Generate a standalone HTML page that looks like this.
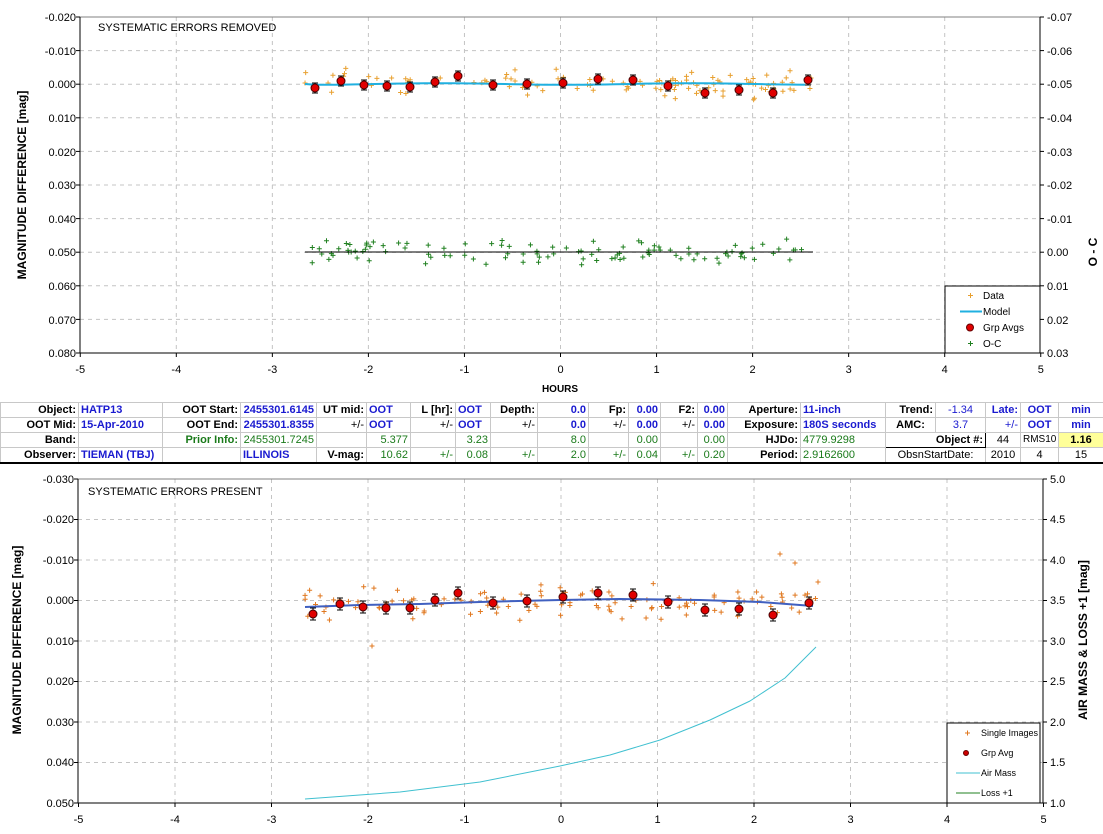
<!DOCTYPE html>
<html><head><meta charset="utf-8"><style>
html,body{margin:0;padding:0;background:#fff;width:1103px;height:834px;overflow:hidden;font-family:"Liberation Sans",Arial,sans-serif}
#tbl{position:absolute;left:0;top:402px;border-collapse:collapse;table-layout:fixed;width:1103px;font-size:11px;border-top:1px solid #000;border-bottom:2px solid #000}
#tbl td{height:14px;padding:0 2px;border:1px solid #c8c8c8;white-space:nowrap;overflow:hidden;line-height:14px;text-align:right}
.b{font-weight:bold}.bl{color:#1a1ad0}.g{color:#1a7a1a}.l{text-align:left!important}.c{text-align:center!important}
</style></head><body>
<svg id="s" width="1103" height="834" style="position:absolute;left:0;top:0" font-family="Liberation Sans, Arial, sans-serif">
<g id="top"></g><g id="bot"></g>
<text x="98" y="31" font-size="11">SYSTEMATIC ERRORS REMOVED</text>
<text x="88" y="495" font-size="11">SYSTEMATIC ERRORS PRESENT</text>
<text transform="translate(26,185) rotate(-90)" font-size="12" font-weight="bold" text-anchor="middle">MAGNITUDE DIFFERENCE [mag]</text>
<text transform="translate(21,640) rotate(-90)" font-size="12" font-weight="bold" text-anchor="middle">MAGNITUDE DIFFERENCE [mag]</text>
<text transform="translate(1097,252) rotate(-90)" font-size="12" font-weight="bold" text-anchor="middle">O - C</text>
<text transform="translate(1087,640) rotate(-90)" font-size="12" font-weight="bold" text-anchor="middle">AIR MASS &amp; LOSS +1 [mag]</text>
<text x="560" y="392" font-size="10" font-weight="bold" text-anchor="middle">HOURS</text>
<g font-size="11" fill="#000">
<text x="76" y="21" text-anchor="end">-0.020</text><text x="76" y="55" text-anchor="end">-0.010</text><text x="76" y="88" text-anchor="end">0.000</text><text x="76" y="122" text-anchor="end">0.010</text><text x="76" y="156" text-anchor="end">0.020</text><text x="76" y="189" text-anchor="end">0.030</text><text x="76" y="223" text-anchor="end">0.040</text><text x="76" y="256" text-anchor="end">0.050</text><text x="76" y="290" text-anchor="end">0.060</text><text x="76" y="324" text-anchor="end">0.070</text><text x="76" y="357" text-anchor="end">0.080</text>
<text x="1047" y="21">-0.07</text><text x="1047" y="55">-0.06</text><text x="1047" y="88">-0.05</text><text x="1047" y="122">-0.04</text><text x="1047" y="156">-0.03</text><text x="1047" y="189">-0.02</text><text x="1047" y="223">-0.01</text><text x="1047" y="256">0.00</text><text x="1047" y="290">0.01</text><text x="1047" y="324">0.02</text><text x="1047" y="357">0.03</text>
<text x="74" y="483" text-anchor="end">-0.030</text><text x="74" y="523" text-anchor="end">-0.020</text><text x="74" y="564" text-anchor="end">-0.010</text><text x="74" y="604" text-anchor="end">0.000</text><text x="74" y="645" text-anchor="end">0.010</text><text x="74" y="685" text-anchor="end">0.020</text><text x="74" y="726" text-anchor="end">0.030</text><text x="74" y="766" text-anchor="end">0.040</text><text x="74" y="807" text-anchor="end">0.050</text>
<text x="1050" y="483">5.0</text><text x="1050" y="523">4.5</text><text x="1050" y="564">4.0</text><text x="1050" y="604">3.5</text><text x="1050" y="645">3.0</text><text x="1050" y="685">2.5</text><text x="1050" y="726">2.0</text><text x="1050" y="766">1.5</text><text x="1050" y="807">1.0</text>
</g>
<g id="xl" font-size="11" text-anchor="middle"></g>
<rect x="945" y="286" width="95" height="67" fill="#fff" stroke="#000"/>
<g font-size="10"><text x="983" y="299">Data</text><text x="983" y="315">Model</text><text x="983" y="331">Grp Avgs</text><text x="983" y="347">O-C</text></g>
<path d="M968 295.5h5M970.5 293v5" stroke="#e8a030"/><path d="M960 311.5h22" stroke="#20b0e0" stroke-width="2"/><circle cx="970" cy="327.5" r="3.5" fill="#e00000" stroke="#600"/><path d="M968 343.5h5M970.5 341v5" stroke="#208020"/>
<rect x="947" y="723" width="93" height="80" fill="#fff" stroke="#000"/>
<g font-size="9"><text x="981" y="736">Single Images</text><text x="981" y="756">Grp Avg</text><text x="981" y="776">Air Mass</text><text x="981" y="796">Loss +1</text></g>
<path d="M965 733h5M967.5 730.5v5" stroke="#e07820"/><circle cx="966" cy="753" r="2.5" fill="#c00" stroke="#600"/><path d="M956 773h24" stroke="#40c0d0"/><path d="M956 793h24" stroke="#208020"/>
</svg>
<table id="tbl"><colgroup>
<col style="width:78px"><col style="width:84px"><col style="width:78px"><col style="width:76px"><col style="width:50px"><col style="width:44px"><col style="width:45px"><col style="width:35px"><col style="width:47px"><col style="width:51px"><col style="width:40px"><col style="width:32px"><col style="width:37px"><col style="width:30px"><col style="width:73px"><col style="width:85px"><col style="width:50px"><col style="width:50px"><col style="width:35px"><col style="width:38px"><col style="width:45px"></colgroup>
<tr><td class="b">Object:</td><td class="b bl l">HATP13</td><td class="b">OOT Start:</td><td class="b bl">2455301.6145</td><td class="b">UT mid:</td><td class="b bl l">OOT</td><td class="b">L [hr]:</td><td class="b bl l">OOT</td><td class="b">Depth:</td><td class="b bl">0.0</td><td class="b">Fp:</td><td class="b bl">0.00</td><td class="b">F2:</td><td class="b bl">0.00</td><td class="b">Aperture:</td><td class="b bl l">11-inch</td><td class="b">Trend:</td><td class="bl c">-1.34</td><td class="b bl">Late:</td><td class="b bl c">OOT</td><td class="b bl c">min</td></tr>
<tr><td class="b">OOT Mid:</td><td class="b bl l">15-Apr-2010</td><td class="b">OOT End:</td><td class="b bl">2455301.8355</td><td>+/-</td><td class="b bl l">OOT</td><td>+/-</td><td class="b bl l">OOT</td><td>+/-</td><td class="b bl">0.0</td><td>+/-</td><td class="b bl">0.00</td><td>+/-</td><td class="b bl">0.00</td><td class="b">Exposure:</td><td class="b bl l">180S seconds</td><td class="b c">AMC:</td><td class="bl c">3.7</td><td class="bl">+/-</td><td class="b bl c">OOT</td><td class="b bl c">min</td></tr>
<tr><td class="b">Band:</td><td></td><td class="b g">Prior Info:</td><td class="g">2455301.7245</td><td></td><td class="g">5.377</td><td></td><td class="g">3.23</td><td></td><td class="g">8.0</td><td></td><td class="g">0.00</td><td></td><td class="g">0.00</td><td class="b">HJDo:</td><td class="g l">4779.9298</td><td colspan="2" class="b" style="border-color:#000">Object #:</td><td class="c">44</td><td class="l" style="font-size:10px">RMS10</td><td class="b c" style="background:#ffff99">1.16</td></tr>
<tr><td class="b">Observer:</td><td class="b bl l">TIEMAN (TBJ)</td><td></td><td class="b bl l">ILLINOIS</td><td class="b">V-mag:</td><td class="g">10.62</td><td class="g">+/-</td><td class="g">0.08</td><td class="g">+/-</td><td class="g">2.0</td><td class="g">+/-</td><td class="g">0.04</td><td class="g">+/-</td><td class="g">0.20</td><td class="b">Period:</td><td class="g l">2.9162600</td><td colspan="2" class="c">ObsnStartDate:</td><td class="c">2010</td><td class="c">4</td><td class="c">15</td></tr>
</table>
<script>
var NS="http://www.w3.org/2000/svg";
function el(p,t,a){var e=document.createElementNS(NS,t);for(var k in a)e.setAttribute(k,a[k]);p.appendChild(e);return e;}
var seed=7;function rnd(){seed=(seed*16807)%2147483647;return seed/2147483647;}
function gauss(){return (rnd()+rnd()+rnd()-1.5)/1.5;}
function plus(g,x,y,c){el(g,"path",{d:"M"+(x-2.5)+" "+y+"h5M"+x+" "+(y-2.5)+"v5",stroke:c,"stroke-width":1});}
function frame(g,L,R,T,B,X0,S,ys){
 for(var h=-4;h<=4;h++){var x=X0+h*S;el(g,"line",{x1:x,x2:x,y1:T,y2:B,stroke:"#c4c4c4","stroke-dasharray":"4,4"});}
 ys.forEach(function(y,i){if(i>0&&i<ys.length-1)el(g,"line",{x1:L,x2:R,y1:y,y2:y,stroke:"#c4c4c4","stroke-dasharray":"4,4"});
  el(g,"line",{x1:L-4,x2:L,y1:y,y2:y,stroke:"#000"});el(g,"line",{x1:R,x2:R+4,y1:y,y2:y,stroke:"#000"});});
 el(g,"line",{x1:L,x2:R,y1:T,y2:T,stroke:"#808080"});
 el(g,"line",{x1:L,x2:L,y1:T,y2:B,stroke:"#000"});el(g,"line",{x1:R,x2:R,y1:T,y2:B,stroke:"#000"});
 el(g,"line",{x1:L,x2:R,y1:B,y2:B,stroke:"#000"});
 for(var h=-5;h<=5;h++){var x=X0+h*S;el(g,"line",{x1:x,x2:x,y1:B,y2:B+4,stroke:"#000"});}
}
var tg=document.getElementById("top"),bg=document.getElementById("bot"),xl=document.getElementById("xl");
var ty=[],by=[];for(var i=0;i<=10;i++)ty.push(17+i*33.6);for(i=0;i<=8;i++)by.push(479+i*40.5);
frame(tg,80,1040,17,353,560.5,96.05,ty);frame(bg,78,1043,479,803,561,96.5,by);
for(var h=-5;h<=5;h++){var t=el(xl,"text",{x:560.5+h*96.05,y:373});t.textContent=h;t=el(xl,"text",{x:561+h*96.5,y:823});t.textContent=h;}
for(i=0;i<110;i++){var x=305+rnd()*508;plus(tg,x,84+gauss()*18,"#e8a030");}
var d="M305 84";for(var x=315;x<=813;x+=10)d+=" L"+x+" "+(84+Math.sin(x/40)*0.8);el(tg,"path",{d:d,stroke:"#20b0e0","stroke-width":2,fill:"none"});
for(i=0;i<110;i++){plus(tg,305+rnd()*505,252+gauss()*16,"#208020");}
el(tg,"line",{x1:305,x2:813,y1:252,y2:252,stroke:"#000"});
var ga=[[315,88],[341,81],[364,85],[387,86],[410,87],[435,82],[458,76],[493,85],[527,84],[563,83],[598,79],[633,80],[668,86],[705,93],[739,90],[773,93],[808,80]];
ga.forEach(function(p){el(tg,"path",{d:"M"+p[0]+" "+(p[1]-5)+"v10M"+(p[0]-3)+" "+(p[1]+5)+"h6M"+(p[0]-3)+" "+(p[1]-5)+"h6",stroke:"#000"});el(tg,"circle",{cx:p[0],cy:p[1],r:4,fill:"#e00000",stroke:"#400"});});
// air mass through reference points
var ap=[[305,799],[400,792],[480,782],[560,766],[610,755],[660,740],[710,720],[750,701],[785,678],[816,647]];
d="M"+ap[0][0]+" "+ap[0][1];for(i=1;i<ap.length;i++)d+=" L"+ap[i][0]+" "+ap[i][1];
el(bg,"path",{d:d,stroke:"#40c0d0",fill:"none","stroke-linejoin":"round"});
for(i=0;i<120;i++){x=305+rnd()*515;plus(bg,x,602+gauss()*22,"#e07820");}
plus(bg,780,554,"#e07820");plus(bg,795,563,"#e07820");plus(bg,372,646,"#e07820");plus(bg,818,582,"#e07820");
d="M305 607";[[360,605],[420,604],[480,602],[560,600],[620,599],[700,600],[760,602],[813,606]].forEach(function(p){d+=" L"+p[0]+" "+p[1];});
el(bg,"path",{d:d,stroke:"#4060c0","stroke-width":2,fill:"none"});
var gb=[[313,614],[340,604],[363,607],[386,608],[410,608],[435,600],[458,593],[493,603],[527,601],[563,597],[598,593],[633,595],[668,602],[705,610],[739,609],[773,615],[809,603]];
gb.forEach(function(p){el(bg,"path",{d:"M"+p[0]+" "+(p[1]-6)+"v12M"+(p[0]-3)+" "+(p[1]+6)+"h6M"+(p[0]-3)+" "+(p[1]-6)+"h6",stroke:"#000"});el(bg,"circle",{cx:p[0],cy:p[1],r:4,fill:"#e00000",stroke:"#400"});});
</script>
</body></html>
